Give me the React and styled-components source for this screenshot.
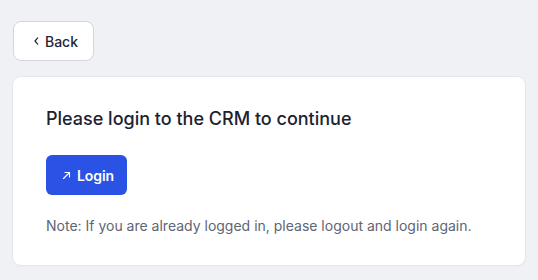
import React from "react";
import styled, { createGlobalStyle } from "styled-components";

const Global = createGlobalStyle`
  html, body { margin: 0; padding: 0; background: #f0f1f4; }
  body { font-family: Inter, "Noto Sans", sans-serif; -webkit-font-smoothing: antialiased; }
`;

const Page = styled.div`
  padding: 21px 13px 15px 13px;
  display: flex;
  flex-direction: column;
  align-items: flex-start;
  gap: 16px;
`;

const BackButton = styled.button`
  display: inline-flex;
  align-items: center;
  gap: 6px;
  height: 40px;
  padding: 0 15px 0 20px;
  width: 81px;
  background: #ffffff;
  border: 1px solid #d4d6dc;
  border-radius: 8px;
  font-family: Inter, sans-serif;
  font-size: 14px;
  font-weight: 500;
  color: #1f2533;
  cursor: pointer;
`;

const Card = styled.section`
  align-self: stretch;
  background: #ffffff;
  border-radius: 8px;
  box-shadow: 0 0 0 1px #e4e6ea, 0 1px 2px rgba(0,0,0,0.06);
  padding: 28px 33px 29px 33px;
  display: flex;
  flex-direction: column;
  align-items: flex-start;
`;

const Title = styled.h2`
  margin: 0;
  font-size: 18px;
  line-height: 28px;
  font-weight: 500;
  color: #1c2230;
`;

const LoginButton = styled.button`
  margin-top: 22px;
  display: inline-flex;
  align-items: center;
  gap: 6px;
  height: 40px;
  padding: 0 13px 0 16px;
  background: #2a52e4;
  border: none;
  border-radius: 6px;
  color: #ffffff;
  font-family: Inter, sans-serif;
  font-size: 14px;
  font-weight: 600;
  letter-spacing: -0.1px;
  cursor: pointer;
`;

const Note = styled.p`
  margin: 21px 0 0 0;
  font-size: 14px;
  line-height: 20px;
  color: #5e6574;
`;

export default function App() {
  return (
    <>
      <Global />
      <Page>
        <BackButton>
          <svg width="6" height="10" viewBox="0 0 6 10" fill="none">
            <path d="M4.5 1.2 L1.2 5 L4.5 8.8" stroke="#1f2533" strokeWidth="1.4" strokeLinecap="round" strokeLinejoin="round" />
          </svg>
          Back
        </BackButton>
        <Card>
          <Title>Please login to the CRM to continue</Title>
          <LoginButton>
            <svg width="9" height="9" viewBox="0 0 9 9" fill="none">
              <path d="M1.5 7.5 L7.5 1.5 M3 1.5 H7.5 V6" stroke="#ffffff" strokeWidth="1.1" strokeLinecap="round" strokeLinejoin="round" />
            </svg>
            Login
          </LoginButton>
          <Note>Note: If you are already logged in, please logout and login again.</Note>
        </Card>
      </Page>
    </>
  );
}
